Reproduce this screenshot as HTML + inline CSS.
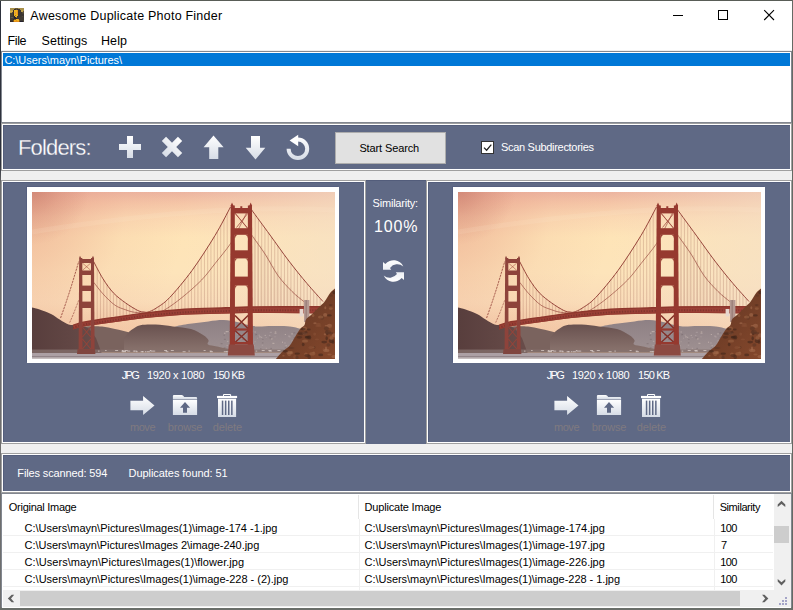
<!DOCTYPE html>
<html><head><meta charset="utf-8"><title>Awesome Duplicate Photo Finder</title>
<style>
*{margin:0;padding:0;box-sizing:border-box}
html,body{width:793px;height:610px;overflow:hidden}
body{position:relative;background:#6a6e69;font-family:"Liberation Sans",sans-serif;}
.a{position:absolute}
.t{position:absolute;white-space:pre;font-family:"Liberation Sans",sans-serif}
#win{left:1px;top:1px;width:791px;height:607px;background:#f0f0f0}
.panel{position:absolute;border:1px solid #a0a0a0;background:#fff}
.panel>i{position:absolute;left:1px;top:1px;right:1px;bottom:1px;background:#5f6985;box-shadow:inset 1px 1px 0 #545e7c}
</style></head><body>
<!-- desktop bleed edges -->
<div class="a" style="left:0;top:0;width:1px;height:610px;background:linear-gradient(#2d313c 0,#2d313c 165px,#6e6e6e 185px,#6e6e6e 100%)"></div>
<div class="a" style="left:0;top:0;width:793px;height:1px;background:#595d57"></div>
<div class="a" style="left:792px;top:0;width:1px;height:610px;background:#656a64"></div>
<div class="a" style="left:0;top:608px;width:793px;height:2px;background:#6a6e69"></div>

<div id="win" class="a"></div>
<!-- title bar + menu -->
<div class="a" style="left:1px;top:1px;width:791px;height:49px;background:#fff"></div>
<svg class="a" style="left:10px;top:8px" width="14" height="14" viewBox="0 0 14 14"><defs><filter id="ib" x="0" y="0" width="1" height="1"><feGaussianBlur stdDeviation="0.45"/></filter><clipPath id="ic"><rect width="14" height="14"/></clipPath></defs><g clip-path="url(#ic)"><rect width="14" height="14" fill="#4a4234"/><g filter="url(#ib)" shape-rendering="crispEdges"><rect x="0" y="0" width="5" height="1" fill="#a89048"/><rect x="5" y="0" width="3" height="1" fill="#6a5a38"/><rect x="8" y="0" width="6" height="1" fill="#a89048"/><rect x="0" y="1" width="4" height="1" fill="#a89048"/><rect x="4" y="1" width="1" height="1" fill="#332c28"/><rect x="5" y="1" width="1" height="1" fill="#3a3430"/><rect x="6" y="1" width="1" height="1" fill="#6a5a38"/><rect x="7" y="1" width="3" height="1" fill="#3a3430"/><rect x="10" y="1" width="4" height="1" fill="#a89048"/><rect x="0" y="2" width="3" height="1" fill="#c0a248"/><rect x="3" y="2" width="1" height="1" fill="#3a3430"/><rect x="4" y="2" width="3" height="1" fill="#f0b41c"/><rect x="7" y="2" width="1" height="1" fill="#e8921e"/><rect x="8" y="2" width="3" height="1" fill="#3a3430"/><rect x="11" y="2" width="2" height="1" fill="#c0a248"/><rect x="13" y="2" width="1" height="1" fill="#a89048"/><rect x="0" y="3" width="3" height="1" fill="#d8b048"/><rect x="3" y="3" width="1" height="1" fill="#332c28"/><rect x="4" y="3" width="3" height="1" fill="#f0b41c"/><rect x="7" y="3" width="1" height="1" fill="#e8921e"/><rect x="8" y="3" width="3" height="1" fill="#3a3430"/><rect x="11" y="3" width="2" height="1" fill="#c0a248"/><rect x="13" y="3" width="1" height="1" fill="#5a5038"/><rect x="0" y="4" width="2" height="1" fill="#c0a248"/><rect x="2" y="4" width="1" height="1" fill="#5a5038"/><rect x="3" y="4" width="1" height="1" fill="#3a3430"/><rect x="4" y="4" width="1" height="1" fill="#f0b41c"/><rect x="5" y="4" width="1" height="1" fill="#dc8c50"/><rect x="6" y="4" width="1" height="1" fill="#f0b41c"/><rect x="7" y="4" width="1" height="1" fill="#e8921e"/><rect x="8" y="4" width="4" height="1" fill="#3a3430"/><rect x="12" y="4" width="2" height="1" fill="#5a5038"/><rect x="0" y="5" width="3" height="1" fill="#4a4234"/><rect x="3" y="5" width="1" height="1" fill="#332c28"/><rect x="4" y="5" width="1" height="1" fill="#f0b41c"/><rect x="5" y="5" width="1" height="1" fill="#dc8c50"/><rect x="6" y="5" width="1" height="1" fill="#f0b41c"/><rect x="7" y="5" width="1" height="1" fill="#e8921e"/><rect x="8" y="5" width="4" height="1" fill="#3a3430"/><rect x="12" y="5" width="2" height="1" fill="#4a4234"/><rect x="0" y="6" width="3" height="1" fill="#4a4234"/><rect x="3" y="6" width="1" height="1" fill="#332c28"/><rect x="4" y="6" width="3" height="1" fill="#f0b41c"/><rect x="7" y="6" width="1" height="1" fill="#e8921e"/><rect x="8" y="6" width="6" height="1" fill="#3a3430"/><rect x="0" y="7" width="3" height="1" fill="#4a4234"/><rect x="3" y="7" width="1" height="1" fill="#332c28"/><rect x="4" y="7" width="1" height="1" fill="#f0b41c"/><rect x="5" y="7" width="1" height="1" fill="#a07420"/><rect x="6" y="7" width="2" height="1" fill="#f0b41c"/><rect x="8" y="7" width="6" height="1" fill="#3a3430"/><rect x="0" y="8" width="4" height="1" fill="#403a36"/><rect x="4" y="8" width="1" height="1" fill="#28242e"/><rect x="5" y="8" width="2" height="1" fill="#f0b41c"/><rect x="7" y="8" width="4" height="1" fill="#3a3430"/><rect x="11" y="8" width="1" height="1" fill="#403a36"/><rect x="12" y="8" width="1" height="1" fill="#504838"/><rect x="13" y="8" width="1" height="1" fill="#403a36"/><rect x="0" y="9" width="1" height="1" fill="#4a4234"/><rect x="1" y="9" width="2" height="1" fill="#5a5a4a"/><rect x="3" y="9" width="1" height="1" fill="#4a4234"/><rect x="4" y="9" width="2" height="1" fill="#28242e"/><rect x="6" y="9" width="1" height="1" fill="#a07420"/><rect x="7" y="9" width="1" height="1" fill="#3a3430"/><rect x="8" y="9" width="6" height="1" fill="#403a36"/><rect x="0" y="10" width="4" height="1" fill="#403a36"/><rect x="4" y="10" width="3" height="1" fill="#28242e"/><rect x="7" y="10" width="2" height="1" fill="#3a3430"/><rect x="9" y="10" width="5" height="1" fill="#403a36"/><rect x="0" y="11" width="3" height="1" fill="#403a36"/><rect x="3" y="11" width="1" height="1" fill="#332c28"/><rect x="4" y="11" width="2" height="1" fill="#7a5218"/><rect x="6" y="11" width="2" height="1" fill="#f0b41c"/><rect x="8" y="11" width="1" height="1" fill="#e8921e"/><rect x="9" y="11" width="5" height="1" fill="#403a36"/><rect x="0" y="12" width="3" height="1" fill="#3a3430"/><rect x="3" y="12" width="1" height="1" fill="#7a5218"/><rect x="4" y="12" width="2" height="1" fill="#f0b41c"/><rect x="6" y="12" width="1" height="1" fill="#e8921e"/><rect x="7" y="12" width="2" height="1" fill="#f0b41c"/><rect x="9" y="12" width="1" height="1" fill="#8a5a18"/><rect x="10" y="12" width="3" height="1" fill="#403a36"/><rect x="13" y="12" width="1" height="1" fill="#504838"/><rect x="0" y="13" width="3" height="1" fill="#332c28"/><rect x="3" y="13" width="1" height="1" fill="#7a5218"/><rect x="4" y="13" width="5" height="1" fill="#e8921e"/><rect x="9" y="13" width="1" height="1" fill="#7a5218"/><rect x="10" y="13" width="3" height="1" fill="#28242e"/><rect x="13" y="13" width="1" height="1" fill="#504838"/></g></g></svg>
<svg class="a" style="left:660px;top:1px" width="131" height="30" viewBox="660 1 131 30" shape-rendering="crispEdges">
<rect x="673" y="15" width="10" height="1" fill="#000"/>
<rect x="718.5" y="10.5" width="9" height="9" fill="none" stroke="#000" stroke-width="1"/>
<g shape-rendering="geometricPrecision" stroke="#000" stroke-width="1.1"><path d="M764.2,10.2L774,20M774,10.2L764.2,20"/></g>
</svg>
<div class="a" style="left:1px;top:50px;width:791px;height:1px;background:#f0f0f0"></div>
<!-- listbox -->
<div class="a" style="left:1px;top:51px;width:791px;height:72px;border:1px solid #828790;background:#fff"></div>
<div class="a" style="left:3px;top:53px;width:787px;height:13px;background:#0078d7"></div>

<!-- toolbar panel -->
<div class="panel" style="left:1px;top:123px;width:791px;height:48px"><i></i></div>
<!-- image panels -->
<div class="panel" style="left:1px;top:180px;width:365px;height:264px"><i></i></div>
<div class="a" style="left:366px;top:180px;width:60px;height:264px;background:#5f6985;box-shadow:inset 0 1px 0 #535d7b"></div>
<div class="panel" style="left:426px;top:180px;width:366px;height:264px"><i></i></div>
<!-- status panel -->
<div class="panel" style="left:1px;top:453px;width:791px;height:40px"><i></i></div>
<!-- list view -->
<div class="a" style="left:1px;top:493px;width:791px;height:115px;border:1px solid #828790;border-bottom-color:#6a6e69;background:#fff"></div>

<svg class="a" style="left:0;top:0;pointer-events:none" width="793" height="610" viewBox="0 0 793 610">
<defs>
<linearGradient id="gw" x1="0" y1="0" x2="0" y2="1"><stop offset="0" stop-color="#ffffff"/><stop offset="1" stop-color="#d6dce6"/></linearGradient>
</defs>
<path fill="url(#gw)" d="M127,136h6v8h8v6h-8v8h-6v-8h-8v-6h8z"/>
<path fill="url(#gw)" transform="rotate(45 172 147)" d="M169,135.6h6v8.4h8.4v6h-8.4v8.4h-6v-8.4h-8.4v-6h8.4z"/>
<path fill="url(#gw)" d="M213.5,135.5L223.6,147.3H218.3V159H209.2V147.3H203.6Z"/>
<path fill="url(#gw)" d="M251,136H260V147.7H265.3L255.5,159.4L245.7,147.7H251Z"/>
<path fill="none" stroke="url(#gw2)" stroke-width="4" d="M288.6,148.8A9.3,9.3 0 1 0 297.9,139.5"/>
<path fill="#fff" d="M289.6,140.6L298.2,134.8V146.2Z"/>
<defs><linearGradient id="gw2" gradientUnits="userSpaceOnUse" x1="0" y1="136" x2="0" y2="160"><stop offset="0" stop-color="#ffffff"/><stop offset="1" stop-color="#d6dce6"/></linearGradient></defs>
<rect x="335.5" y="132.5" width="110" height="31" fill="#e1e1e1" stroke="#adadad"/>
<rect x="481.5" y="141.5" width="12" height="12" fill="#fff" stroke="#333"/>
<path d="M484,147.6L486.6,150.2L491.3,144.6" fill="none" stroke="#222" stroke-width="1.3"/>
<path fill="url(#gw3)" d="M383,261.9L385.3,264A10.8,10.8 0 0 1 403.3,266.5A9.26,9.26 0 0 0 390,267.9L391.2,269.7H383Z"/>
<path fill="url(#gw3)" transform="rotate(180 393.5 271)" d="M383,261.9L385.3,264A10.8,10.8 0 0 1 403.3,266.5A9.26,9.26 0 0 0 390,267.9L391.2,269.7H383Z"/>
<defs><linearGradient id="gw3" gradientUnits="userSpaceOnUse" x1="0" y1="260" x2="0" y2="282"><stop offset="0" stop-color="#ffffff"/><stop offset="1" stop-color="#d6dce6"/></linearGradient></defs>
<g transform="translate(0 0)">
<path fill="url(#gw)" d="M130.4,400.8H143.1V396L154.5,405.5L143.1,415V410.2H130.4Z"/>
<path fill="url(#gw)" d="M172.9,396Q172.9,394.9 174,394.9H181.6Q182.4,394.9 183,395.6L184.2,396.9H196Q197.1,396.9 197.1,398V399H172.9Z"/>
<path fill="url(#gw)" d="M172.9,399.6H197.1V415H172.9Z"/>
<path fill="#5f6985" d="M185,402.1L190.1,407.7H187V412.7H183V407.7H180Z"/>
<path fill="#fff" d="M217,395.9H237.1V398.1H217Z"/>
<path fill="none" stroke="#fff" stroke-width="1" d="M223.5,396V394.5H230.6V396"/>
<path fill="url(#gw)" d="M218,398.7H236.1V417H218Z"/>
<rect x="221.8" y="400.6" width="1.5" height="14.4" fill="#5f6985"/>
<rect x="224.9" y="400.6" width="1.5" height="14.4" fill="#5f6985"/>
<rect x="228.0" y="400.6" width="1.5" height="14.4" fill="#5f6985"/>
<rect x="231.1" y="400.6" width="1.5" height="14.4" fill="#5f6985"/>
</g>
<g transform="translate(424 0)">
<path fill="url(#gw)" d="M130.4,400.8H143.1V396L154.5,405.5L143.1,415V410.2H130.4Z"/>
<path fill="url(#gw)" d="M172.9,396Q172.9,394.9 174,394.9H181.6Q182.4,394.9 183,395.6L184.2,396.9H196Q197.1,396.9 197.1,398V399H172.9Z"/>
<path fill="url(#gw)" d="M172.9,399.6H197.1V415H172.9Z"/>
<path fill="#5f6985" d="M185,402.1L190.1,407.7H187V412.7H183V407.7H180Z"/>
<path fill="#fff" d="M217,395.9H237.1V398.1H217Z"/>
<path fill="none" stroke="#fff" stroke-width="1" d="M223.5,396V394.5H230.6V396"/>
<path fill="url(#gw)" d="M218,398.7H236.1V417H218Z"/>
<rect x="221.8" y="400.6" width="1.5" height="14.4" fill="#5f6985"/>
<rect x="224.9" y="400.6" width="1.5" height="14.4" fill="#5f6985"/>
<rect x="228.0" y="400.6" width="1.5" height="14.4" fill="#5f6985"/>
<rect x="231.1" y="400.6" width="1.5" height="14.4" fill="#5f6985"/>
</g>
</svg>
<svg width="0" height="0" style="position:absolute"><defs>
<linearGradient id="skyv" x1="0" y1="0" x2="0" y2="1">
<stop offset="0" stop-color="#ecb4a0"/><stop offset="0.06" stop-color="#f4c4a6"/><stop offset="0.15" stop-color="#fbd8b2"/><stop offset="0.27" stop-color="#fee4b7"/><stop offset="0.48" stop-color="#fde4ba"/><stop offset="0.66" stop-color="#fadcb8"/><stop offset="0.75" stop-color="#f6d0ae"/><stop offset="0.81" stop-color="#f4caa8"/><stop offset="1" stop-color="#f0c4a4"/></linearGradient>
<linearGradient id="skyh" x1="0" y1="0" x2="1" y2="0">
<stop offset="0.5" stop-color="#f4e0c8" stop-opacity="0"/><stop offset="1" stop-color="#f4e0c8" stop-opacity="0.55"/></linearGradient>
<radialGradient id="skyl" gradientUnits="userSpaceOnUse" cx="-20" cy="14" r="175"><stop offset="0" stop-color="#e69a84" stop-opacity="0.62"/><stop offset="0.35" stop-color="#e69a84" stop-opacity="0.36"/><stop offset="0.65" stop-color="#e69a84" stop-opacity="0.10"/><stop offset="1" stop-color="#e69a84" stop-opacity="0"/></radialGradient>
<radialGradient id="glow" gradientUnits="userSpaceOnUse" cx="0" cy="-5" r="58"><stop offset="0" stop-color="#b8685c" stop-opacity="0.5"/><stop offset="0.5" stop-color="#b8685c" stop-opacity="0.2"/><stop offset="1" stop-color="#b8685c" stop-opacity="0"/></radialGradient>
<linearGradient id="hillL" x1="0" y1="0" x2="1" y2="0"><stop offset="0" stop-color="#583e3d"/><stop offset="1" stop-color="#694d4a"/></linearGradient>
<linearGradient id="hillM" x1="0" y1="0" x2="0" y2="1"><stop offset="0" stop-color="#69514f"/><stop offset="1" stop-color="#8a746e"/></linearGradient>
<linearGradient id="hillF" x1="0" y1="0" x2="0" y2="1"><stop offset="0" stop-color="#8e8084"/><stop offset="1" stop-color="#9f9192"/></linearGradient>
<linearGradient id="cliff" x1="0" y1="0" x2="1" y2="1"><stop offset="0" stop-color="#5e3422"/><stop offset="1" stop-color="#85482c"/></linearGradient>
<clipPath id="pc"><rect width="303" height="167"/></clipPath>

<g id="photo" clip-path="url(#pc)">
<rect width="303" height="167" fill="url(#skyv)"/>
<rect width="303" height="167" fill="url(#skyh)"/>
<rect width="303" height="167" fill="url(#skyl)"/>
<rect width="303" height="167" fill="url(#glow)"/>
<path d="M0,40Q60,30 140,22T303,18" stroke="#fff0d8" stroke-opacity=".12" stroke-width="5" fill="none"/>
<path d="M0,62Q80,50 180,52T303,44" stroke="#e8a890" stroke-opacity="0" stroke-width="4" fill="none"/>
<path fill="url(#hillF)" d="M138.0,140.0C138.9,139.1 140.0,135.9 143.7,134.5C147.4,133.1 154.5,132.3 160.0,131.5C165.5,130.7 171.2,130.0 176.5,129.4C181.8,128.8 186.9,128.0 191.7,128.1C196.4,128.2 201.3,129.3 205.0,130.0C208.7,130.7 210.8,131.8 214.0,132.5C217.2,133.2 220.2,134.2 224.5,134.4C228.8,134.7 234.4,134.0 240.0,134.0C245.6,134.0 253.3,133.9 258.0,134.4C262.7,134.9 265.5,135.9 268.3,136.8C271.1,137.7 273.9,139.5 275.0,140.0L275,160L140,160Z"/>
<rect x="205.1" y="140.0" width="1.5" height="1" fill="#b8a8a8" fill-opacity=".6"/>
<rect x="198.2" y="139.3" width="2" height="1" fill="#b8a8a8" fill-opacity=".6"/>
<rect x="263.0" y="153.2" width="1" height="1" fill="#c8b8b4" fill-opacity=".6"/>
<rect x="229.2" y="144.8" width="1" height="1" fill="#d8c8c0" fill-opacity=".6"/>
<rect x="207.2" y="155.9" width="2" height="1" fill="#c8b8b4" fill-opacity=".6"/>
<rect x="253.6" y="153.2" width="1" height="1" fill="#d8c8c0" fill-opacity=".6"/>
<rect x="211.3" y="149.9" width="1" height="1" fill="#7c6c70" fill-opacity=".6"/>
<rect x="256.8" y="144.4" width="2" height="1" fill="#b8a8a8" fill-opacity=".6"/>
<rect x="206.2" y="142.7" width="1" height="1" fill="#7c6c70" fill-opacity=".6"/>
<rect x="265.3" y="153.5" width="1" height="1" fill="#7c6c70" fill-opacity=".6"/>
<rect x="262.3" y="148.9" width="2" height="1" fill="#7c6c70" fill-opacity=".6"/>
<rect x="201.6" y="146.1" width="1.5" height="1" fill="#7c6c70" fill-opacity=".6"/>
<rect x="223.4" y="142.4" width="1" height="1" fill="#7c6c70" fill-opacity=".6"/>
<rect x="191.9" y="146.8" width="2" height="1" fill="#7c6c70" fill-opacity=".6"/>
<rect x="230.4" y="147.0" width="1" height="1" fill="#7c6c70" fill-opacity=".6"/>
<rect x="269.8" y="141.7" width="1" height="1" fill="#b8a8a8" fill-opacity=".6"/>
<rect x="239.0" y="146.4" width="1.5" height="1" fill="#d8c8c0" fill-opacity=".6"/>
<rect x="222.1" y="149.2" width="1.5" height="1" fill="#d8c8c0" fill-opacity=".6"/>
<rect x="193.6" y="139.2" width="1.5" height="1" fill="#d8c8c0" fill-opacity=".6"/>
<rect x="250.0" y="149.7" width="1" height="1" fill="#d8c8c0" fill-opacity=".6"/>
<rect x="213.1" y="141.4" width="1" height="1" fill="#b8a8a8" fill-opacity=".6"/>
<rect x="188.6" y="151.2" width="2" height="1" fill="#7c6c70" fill-opacity=".6"/>
<rect x="242.4" y="144.2" width="1.5" height="1" fill="#7c6c70" fill-opacity=".6"/>
<rect x="212.3" y="140.9" width="2" height="1" fill="#b8a8a8" fill-opacity=".6"/>
<rect x="242.8" y="139.5" width="1.5" height="1" fill="#d8c8c0" fill-opacity=".6"/>
<rect x="209.8" y="142.8" width="1.5" height="1" fill="#d8c8c0" fill-opacity=".6"/>
<rect x="233.7" y="144.9" width="1" height="1" fill="#b8a8a8" fill-opacity=".6"/>
<rect x="216.0" y="153.3" width="2" height="1" fill="#7c6c70" fill-opacity=".6"/>
<rect x="193.3" y="156.7" width="1" height="1" fill="#b8a8a8" fill-opacity=".6"/>
<rect x="194.7" y="139.2" width="2" height="1" fill="#d8c8c0" fill-opacity=".6"/>
<rect x="242.5" y="140.8" width="2" height="1" fill="#c8b8b4" fill-opacity=".6"/>
<rect x="226.7" y="142.7" width="1" height="1" fill="#c8b8b4" fill-opacity=".6"/>
<rect x="256.0" y="143.6" width="2" height="1" fill="#b8a8a8" fill-opacity=".6"/>
<rect x="269.0" y="147.1" width="1.5" height="1" fill="#d8c8c0" fill-opacity=".6"/>
<rect x="219.9" y="138.7" width="1.5" height="1" fill="#b8a8a8" fill-opacity=".6"/>
<rect x="206.1" y="154.9" width="1.5" height="1" fill="#d8c8c0" fill-opacity=".6"/>
<rect x="201.0" y="138.7" width="1" height="1" fill="#7c6c70" fill-opacity=".6"/>
<rect x="229.7" y="152.7" width="1.5" height="1" fill="#b8a8a8" fill-opacity=".6"/>
<rect x="197.0" y="139.0" width="2" height="1" fill="#7c6c70" fill-opacity=".6"/>
<rect x="194.9" y="148.8" width="1.5" height="1" fill="#c8b8b4" fill-opacity=".6"/>
<rect x="217.9" y="146.2" width="1.5" height="1" fill="#d8c8c0" fill-opacity=".6"/>
<rect x="210.2" y="147.0" width="1.5" height="1" fill="#7c6c70" fill-opacity=".6"/>
<rect x="229.9" y="150.4" width="1.5" height="1" fill="#7c6c70" fill-opacity=".6"/>
<rect x="263.4" y="156.2" width="1.5" height="1" fill="#c8b8b4" fill-opacity=".6"/>
<rect x="266.8" y="150.7" width="1.5" height="1" fill="#c8b8b4" fill-opacity=".6"/>
<rect x="261.4" y="140.4" width="2" height="1" fill="#7c6c70" fill-opacity=".6"/>
<rect x="257.8" y="154.5" width="2" height="1" fill="#b8a8a8" fill-opacity=".6"/>
<rect x="225.1" y="145.7" width="1" height="1" fill="#b8a8a8" fill-opacity=".6"/>
<rect x="252.8" y="142.0" width="1" height="1" fill="#d8c8c0" fill-opacity=".6"/>
<rect x="236.9" y="142.9" width="1.5" height="1" fill="#b8a8a8" fill-opacity=".6"/>
<rect x="259.6" y="148.5" width="1" height="1" fill="#d8c8c0" fill-opacity=".6"/>
<rect x="242.1" y="144.3" width="2" height="1" fill="#b8a8a8" fill-opacity=".6"/>
<rect x="222.4" y="139.5" width="1.5" height="1" fill="#c8b8b4" fill-opacity=".6"/>
<rect x="232.7" y="142.9" width="1" height="1" fill="#d8c8c0" fill-opacity=".6"/>
<rect x="215.8" y="152.6" width="1.5" height="1" fill="#c8b8b4" fill-opacity=".6"/>
<rect x="256.2" y="153.7" width="2" height="1" fill="#c8b8b4" fill-opacity=".6"/>
<rect x="223.6" y="141.9" width="1.5" height="1" fill="#7c6c70" fill-opacity=".6"/>
<rect x="204.9" y="147.2" width="1" height="1" fill="#b8a8a8" fill-opacity=".6"/>
<rect x="191.6" y="155.4" width="2" height="1" fill="#7c6c70" fill-opacity=".6"/>
<rect x="270.0" y="145.9" width="1" height="1" fill="#b8a8a8" fill-opacity=".6"/>
<rect x="238.4" y="155.9" width="1.5" height="1" fill="#7c6c70" fill-opacity=".6"/>
<rect x="220.9" y="153.2" width="1.5" height="1" fill="#d8c8c0" fill-opacity=".6"/>
<rect x="259.3" y="141.4" width="1.5" height="1" fill="#d8c8c0" fill-opacity=".6"/>
<rect x="227.0" y="144.4" width="2" height="1" fill="#c8b8b4" fill-opacity=".6"/>
<rect x="199.3" y="150.3" width="2" height="1" fill="#c8b8b4" fill-opacity=".6"/>
<rect x="194.4" y="152.9" width="2" height="1" fill="#b8a8a8" fill-opacity=".6"/>
<rect x="191.4" y="142.7" width="1.5" height="1" fill="#7c6c70" fill-opacity=".6"/>
<rect x="204.5" y="141.4" width="2" height="1" fill="#c8b8b4" fill-opacity=".6"/>
<rect x="189.5" y="155.2" width="2" height="1" fill="#b8a8a8" fill-opacity=".6"/>
<rect x="211.0" y="154.5" width="2" height="1" fill="#b8a8a8" fill-opacity=".6"/>
<rect x="237.5" y="145.4" width="2" height="1" fill="#7c6c70" fill-opacity=".6"/>
<rect x="215.8" y="150.6" width="1.5" height="1" fill="#d8c8c0" fill-opacity=".6"/>
<rect x="192.0" y="140.7" width="1.5" height="1" fill="#d8c8c0" fill-opacity=".6"/>
<rect x="261.7" y="145.1" width="2" height="1" fill="#7c6c70" fill-opacity=".6"/>
<rect x="237.8" y="139.8" width="2" height="1" fill="#b8a8a8" fill-opacity=".6"/>
<rect x="264.6" y="141.4" width="1.5" height="1" fill="#7c6c70" fill-opacity=".6"/>
<rect x="199.8" y="154.8" width="2" height="1" fill="#c8b8b4" fill-opacity=".6"/>
<rect x="265.7" y="153.8" width="1" height="1" fill="#7c6c70" fill-opacity=".6"/>
<rect x="198.5" y="149.1" width="2" height="1" fill="#b8a8a8" fill-opacity=".6"/>
<rect x="233.8" y="155.8" width="1" height="1" fill="#c8b8b4" fill-opacity=".6"/>
<rect x="240.4" y="150.8" width="2" height="1" fill="#d8c8c0" fill-opacity=".6"/>
<rect x="251.9" y="150.5" width="2" height="1" fill="#b8a8a8" fill-opacity=".6"/>
<rect x="205.2" y="147.3" width="1.5" height="1" fill="#d8c8c0" fill-opacity=".6"/>
<rect x="216.2" y="152.2" width="1.5" height="1" fill="#b8a8a8" fill-opacity=".6"/>
<rect x="228.0" y="156.4" width="1.5" height="1" fill="#7c6c70" fill-opacity=".6"/>
<rect x="222.3" y="149.2" width="1" height="1" fill="#7c6c70" fill-opacity=".6"/>
<rect x="261.3" y="146.7" width="1.5" height="1" fill="#7c6c70" fill-opacity=".6"/>
<rect x="265.8" y="149.8" width="2" height="1" fill="#d8c8c0" fill-opacity=".6"/>
<rect x="190.8" y="156.5" width="2" height="1" fill="#7c6c70" fill-opacity=".6"/>
<rect x="252.7" y="155.3" width="1.5" height="1" fill="#7c6c70" fill-opacity=".6"/>
<path fill="#7a635e" d="M40.0,136.0C43.0,135.7 53.0,134.5 58.0,134.3C63.0,134.1 65.8,134.2 70.0,134.6C74.2,135.0 78.3,136.0 83.0,137.0C87.7,138.0 94.2,139.2 98.0,140.7C101.8,142.2 104.7,145.1 106.0,146.0L106,160L40,160Z"/>
<path fill="url(#hillM)" d="M92.0,146.0C92.7,145.2 94.7,142.4 96.0,141.0C97.3,139.6 97.9,138.8 100.0,137.5C102.1,136.2 104.5,134.0 108.4,133.2C112.3,132.4 118.2,132.4 123.6,132.6C129.0,132.8 135.1,133.7 141.0,134.4C146.9,135.1 153.9,135.5 159.0,137.0C164.1,138.5 168.6,141.4 171.5,143.3C174.4,145.2 175.8,146.8 176.5,148.3C177.2,149.8 174.6,151.5 176.0,152.5C177.4,153.5 181.5,153.8 185.0,154.5C188.5,155.2 195.0,156.6 197.0,157.0L197,160L92,160Z"/>
<path fill="url(#hillL)" d="M0.0,115.4C1.3,115.7 4.4,116.3 7.6,117.4C10.8,118.5 15.7,120.3 19.0,122.0C22.4,123.7 24.8,125.8 27.7,127.6C30.6,129.4 33.6,131.6 36.6,132.6C39.6,133.6 42.2,132.9 45.4,133.5C48.6,134.1 52.9,133.9 56.0,136.0C59.1,138.1 62.7,144.3 64.0,146.0L70,162L0,162Z"/>
<rect x="0" y="157.5" width="260" height="4.5" fill="#85726e" fill-opacity=".75"/>
<rect x="102.2" y="158.6" width="3" height="1" fill="#e0d4d0" fill-opacity=".7"/>
<rect x="207.8" y="158.0" width="1.5" height="1" fill="#e0d4d0" fill-opacity=".7"/>
<rect x="73.1" y="158.0" width="1.5" height="1" fill="#e0d4d0" fill-opacity=".7"/>
<rect x="91.0" y="159.2" width="3" height="1" fill="#e0d4d0" fill-opacity=".7"/>
<rect x="177.9" y="159.2" width="3" height="1" fill="#e0d4d0" fill-opacity=".7"/>
<rect x="109.8" y="159.2" width="1.5" height="1" fill="#e0d4d0" fill-opacity=".7"/>
<rect x="89.9" y="158.0" width="1.5" height="1" fill="#e0d4d0" fill-opacity=".7"/>
<rect x="66.0" y="158.6" width="1.5" height="1" fill="#e0d4d0" fill-opacity=".7"/>
<rect x="83.1" y="158.0" width="3" height="1" fill="#e0d4d0" fill-opacity=".7"/>
<rect x="114.9" y="159.2" width="3" height="1" fill="#e0d4d0" fill-opacity=".7"/>
<rect x="92.7" y="158.0" width="3" height="1" fill="#e0d4d0" fill-opacity=".7"/>
<rect x="138.8" y="158.0" width="3" height="1" fill="#e0d4d0" fill-opacity=".7"/>
<rect x="196.7" y="159.2" width="2" height="1" fill="#e0d4d0" fill-opacity=".7"/>
<rect x="191.8" y="159.2" width="3" height="1" fill="#e0d4d0" fill-opacity=".7"/>
<rect x="89.6" y="158.6" width="1.5" height="1" fill="#e0d4d0" fill-opacity=".7"/>
<rect x="100.9" y="158.6" width="2" height="1" fill="#e0d4d0" fill-opacity=".7"/>
<rect x="156.4" y="158.6" width="1.5" height="1" fill="#e0d4d0" fill-opacity=".7"/>
<rect x="91.0" y="158.6" width="3" height="1" fill="#e0d4d0" fill-opacity=".7"/>
<rect x="134.4" y="159.2" width="2" height="1" fill="#e0d4d0" fill-opacity=".7"/>
<rect x="223.7" y="158.6" width="1.5" height="1" fill="#e0d4d0" fill-opacity=".7"/>
<rect x="133.5" y="158.6" width="1.5" height="1" fill="#e0d4d0" fill-opacity=".7"/>
<rect x="112.9" y="159.2" width="1.5" height="1" fill="#e0d4d0" fill-opacity=".7"/>
<rect x="117.8" y="158.0" width="1.5" height="1" fill="#e0d4d0" fill-opacity=".7"/>
<rect x="89.8" y="159.2" width="1.5" height="1" fill="#e0d4d0" fill-opacity=".7"/>
<rect x="104.1" y="159.2" width="1.5" height="1" fill="#e0d4d0" fill-opacity=".7"/>
<rect x="150.6" y="159.2" width="3" height="1" fill="#e0d4d0" fill-opacity=".7"/>
<rect x="95.2" y="158.6" width="3" height="1" fill="#e0d4d0" fill-opacity=".7"/>
<rect x="194.2" y="159.2" width="3" height="1" fill="#e0d4d0" fill-opacity=".7"/>
<rect x="132.1" y="158.0" width="3" height="1" fill="#e0d4d0" fill-opacity=".7"/>
<rect x="171.6" y="158.0" width="2" height="1" fill="#e0d4d0" fill-opacity=".7"/>
<rect x="177.7" y="158.6" width="2" height="1" fill="#e0d4d0" fill-opacity=".7"/>
<rect x="236.8" y="158.6" width="3" height="1" fill="#e0d4d0" fill-opacity=".7"/>
<rect x="200.2" y="159.2" width="1.5" height="1" fill="#e0d4d0" fill-opacity=".7"/>
<rect x="108.6" y="159.2" width="3" height="1" fill="#e0d4d0" fill-opacity=".7"/>
<rect x="118.4" y="158.6" width="3" height="1" fill="#e0d4d0" fill-opacity=".7"/>
<rect x="218.4" y="158.0" width="1.5" height="1" fill="#e0d4d0" fill-opacity=".7"/>
<rect x="229.7" y="158.0" width="3" height="1" fill="#e0d4d0" fill-opacity=".7"/>
<rect x="245.4" y="158.0" width="3" height="1" fill="#e0d4d0" fill-opacity=".7"/>
<rect x="121.2" y="158.6" width="2" height="1" fill="#e0d4d0" fill-opacity=".7"/>
<rect x="236.4" y="158.0" width="3" height="1" fill="#e0d4d0" fill-opacity=".7"/>
<rect x="0" y="161" width="303" height="6" fill="#aca0a4"/>
<rect x="0" y="164.2" width="303" height="1" fill="#8a7e82"/>
<rect x="0" y="165.6" width="303" height="1.4" fill="#c6bebe"/>
<path d="M65.20,76.1V128.0M68.45,82.1V127.5M71.70,87.7V127.0M74.95,92.1V126.6M78.20,96.5V126.1M81.45,100.9V125.6M84.70,103.6V125.1M87.95,106.3V124.7M91.20,109.0V124.2M94.45,111.5V123.7M97.70,113.5V123.3M100.95,115.5V122.8M104.20,117.5V122.4M107.45,118.9V121.9M110.70,119.7V121.4M120.45,117.9V120.4M123.70,116.4V120.1M126.95,113.9V119.8M130.20,111.4V119.4M133.45,108.9V119.1M136.70,106.3V118.8M139.95,102.7V118.5M143.20,98.8V118.2M146.45,94.9V117.9M149.70,91.0V117.6M152.95,87.0V117.3M156.20,83.1V117.2M159.45,79.2V117.1M162.70,74.4V116.9M165.95,69.4V116.8M169.20,64.5V116.7M172.45,59.6V116.6M175.70,54.6V116.5M178.95,49.7V116.3M182.20,44.7V116.2M185.45,39.0V116.1M188.70,33.0V116.0M191.95,27.0V115.9M195.20,21.1V115.8M223.20,22.8V115.0M226.45,27.2V114.9M229.70,31.7V114.9M232.95,36.1V114.9M236.20,40.5V114.9M239.45,45.0V114.9M242.70,49.5V114.8M245.95,53.9V114.8M249.20,58.4V114.8M252.45,62.9V114.8M255.70,67.3V114.8M258.95,71.5V114.8M262.20,75.6V114.8M265.45,79.6V114.8M268.70,83.7V114.8M271.95,87.7V114.7M275.20,91.7V114.7M278.45,95.4V114.7M281.70,99.0V114.7M284.95,102.7V114.7M288.20,106.3V114.7" stroke="#98604f" stroke-opacity=".5" stroke-width=".55" fill="none"/>
<path d="M222.35,44.6V115.0M225.60,49.2V115.0M228.85,53.8V114.9M232.10,58.4V114.9M235.35,63.2V114.9M238.60,68.6V114.9M241.85,74.0V114.9M245.10,79.4V114.8M248.35,84.5V114.8M251.60,88.2V114.8M254.85,91.9V114.8M258.10,95.5V114.8M261.35,99.2V114.8M264.60,102.0V114.8M267.85,104.8V114.8M271.10,107.6V114.8" stroke="#9a5a4c" stroke-opacity=".28" stroke-width=".6" fill="none"/>
<path d="M61.9,90.5C63.4,92.4 67.5,98.1 71.0,101.9C74.5,105.7 79.2,110.6 83.0,113.2C86.8,115.8 90.4,116.6 93.7,117.8C97.0,119.0 98.7,119.7 102.7,120.3C106.8,120.9 114.1,121.2 118.0,121.2C121.9,121.2 123.4,120.9 126.0,120.2C128.6,119.5 129.7,119.8 133.7,117.3C137.7,114.8 144.0,110.4 150.0,105.5C156.0,100.6 164.1,93.7 169.6,88.0C175.1,82.3 178.2,77.6 183.0,71.6C187.8,65.5 194.5,57.6 198.5,51.7C202.5,45.8 204.1,41.6 207.0,36.0C209.9,30.4 214.5,21.0 216.0,18.0" stroke="#8c362e" stroke-opacity="0.75" stroke-width="0.8" fill="none"/>
<path d="M201.5,19.0C203.6,21.7 211.1,30.8 214.3,35.0C217.5,39.2 217.6,40.0 220.7,44.5C223.8,49.0 228.7,55.4 233.0,62.0C237.3,68.6 241.8,77.8 246.3,84.0C250.8,90.2 255.8,95.2 260.0,99.5C264.2,103.8 269.8,107.8 271.8,109.5" stroke="#8c362e" stroke-opacity="0.75" stroke-width="0.8" fill="none"/>
<path d="M37.7,130.6C38.4,128.9 40.5,124.3 42.0,120.5C43.5,116.7 46.0,110.1 46.8,108.0" stroke="#8c362e" stroke-opacity="0.7" stroke-width="0.8" fill="none" stroke-dasharray="2.2 .9"/>
<path d="M61.1,68.6C62.8,71.6 67.6,81.4 71.0,86.8C74.4,92.2 77.8,97.1 81.6,101.1C85.4,105.1 89.7,108.1 93.7,111.0C97.7,113.9 102.8,117.0 105.8,118.5C108.8,120.0 110.3,119.8 112.0,120.0C113.7,120.2 114.0,120.6 116.0,120.0C118.0,119.4 120.3,118.7 123.9,116.3C127.5,113.9 131.5,112.0 137.5,105.7C143.5,99.4 152.4,88.9 160.0,78.5C167.6,68.1 176.6,54.1 183.0,43.5C189.4,32.9 195.9,19.8 198.5,15.0" stroke="#8c362e" stroke-opacity="0.95" stroke-width="0.95" fill="none"/>
<path d="M219.6,17.9C222.7,22.1 231.8,34.5 238.0,43.0C244.2,51.5 250.7,60.9 256.9,69.0C263.1,77.1 269.3,84.8 275.0,91.5C280.7,98.2 288.3,106.5 291.0,109.5" stroke="#8c362e" stroke-opacity="0.95" stroke-width="0.95" fill="none"/>
<path d="M28.6,126.0C29.5,123.4 32.1,116.2 34.0,110.5C35.9,104.8 37.9,98.9 40.0,92.0C42.1,85.1 45.7,73.1 46.8,69.3" stroke="#8c362e" stroke-opacity="0.85" stroke-width="0.9" fill="none" stroke-dasharray="2.2 .9"/>
<path d="M41.0,133.2C42.5,132.7 46.5,131.2 50.0,130.4C53.5,129.6 57.0,129.3 62.0,128.5C67.0,127.7 71.5,127.0 80.0,125.8C88.5,124.6 100.9,122.5 113.0,121.1C125.1,119.7 139.1,118.2 152.6,117.3C166.1,116.4 183.4,116.2 194.0,115.8C204.6,115.4 206.7,115.2 216.0,115.0C225.3,114.8 237.7,114.8 250.0,114.8C262.3,114.8 283.3,114.7 290.0,114.7L290.0,121.4 L250.0,121.1 L216.0,121.0 L194.0,121.6 L152.6,122.7 L113.0,126.1 L80.0,130.5 L62.0,133.0 L50.0,134.8 L41.0,137.5Z" fill="#9b4036"/>
<path d="M41.0,133.2C42.5,132.7 46.5,131.2 50.0,130.4C53.5,129.6 57.0,129.3 62.0,128.5C67.0,127.7 71.5,127.0 80.0,125.8C88.5,124.6 100.9,122.5 113.0,121.1C125.1,119.7 139.1,118.2 152.6,117.3C166.1,116.4 183.4,116.2 194.0,115.8C204.6,115.4 206.7,115.2 216.0,115.0C225.3,114.8 237.7,114.8 250.0,114.8C262.3,114.8 283.3,114.7 290.0,114.7" stroke="#8e362c" stroke-width="1.4" fill="none"/>
<path d="M41.0,137.0C42.5,136.5 46.5,135.0 50.0,134.3C53.5,133.5 57.0,133.2 62.0,132.5C67.0,131.8 71.5,131.1 80.0,130.0C88.5,128.8 100.9,126.9 113.0,125.6C125.1,124.3 139.1,122.9 152.6,122.2C166.1,121.4 183.4,121.4 194.0,121.1C204.6,120.8 206.7,120.6 216.0,120.5C225.3,120.4 237.7,120.5 250.0,120.6C262.3,120.7 283.3,120.9 290.0,120.9" stroke="#93392f" stroke-width="1" fill="none"/>
<path d="M41.0,135.6C42.5,135.1 46.5,133.6 50.0,132.8C53.5,132.0 57.0,131.7 62.0,131.0C67.0,130.2 71.5,129.6 80.0,128.4C88.5,127.2 100.9,125.2 113.0,123.8C125.1,122.5 139.1,121.1 152.6,120.3C166.1,119.4 183.4,119.3 194.0,119.0C204.6,118.6 206.7,118.4 216.0,118.3C225.3,118.2 237.7,118.3 250.0,118.3C262.3,118.3 283.3,118.4 290.0,118.4" stroke="#6a2c26" stroke-width="1.8" stroke-dasharray="1.2 1.5" stroke-opacity=".55" fill="none"/>
<path fill="#96392f" d="M198.7,13.5H202.8L203.0,153H197.7Z"/>
<path fill="#96392f" d="M215.9,13.5H220L221.0,153H215.70000000000002Z"/>
<rect x="199.7" y="16" width="19.30000000000001" height="5.399999999999999" fill="#96392f"/>
<rect x="199.7" y="36.2" width="19.30000000000001" height="6.599999999999994" fill="#96392f"/>
<rect x="199.7" y="58.3" width="19.30000000000001" height="8.100000000000009" fill="#96392f"/>
<rect x="199.7" y="84.6" width="19.30000000000001" height="8.900000000000006" fill="#96392f"/>
<path fill="#96392f" d="M198.5,14L200,10.5L201.6,14ZM217.2,14L218.7,10.5L220.2,14ZM208.3,16V14.2H210.3V16Z"/>
<path fill="#96392f" d="M203,42.8h2.6q-2.4,.6 -2.6,3.4zM215.9,42.8h-2.6q2.4,.6 2.6,3.4z"/>
<path fill="#96392f" d="M203,66.4h2.6q-2.4,.6 -2.6,3.4zM215.9,66.4h-2.6q2.4,.6 2.6,3.4z"/>
<path fill="#96392f" d="M203,93.5h2.6q-2.4,.6 -2.6,3.4zM215.9,93.5h-2.6q2.4,.6 2.6,3.4z"/>
<path stroke="#822f27" stroke-width="1.5" fill="none" d="M203,123.5L216,136.5M216,123.5L203,136.5M203,138.5L216,150.5M216,138.5L203,150.5"/>
<rect x="202" y="136.4" width="15" height="2.2" fill="#96392f"/><rect x="202" y="150" width="15" height="2.5" fill="#96392f"/>
<path fill="#8c4a42" d="M196.8,152.5H221.8L222.8,163.5H195.8Z"/>
<path fill="#8e433b" d="M47.2,66H50.3L50.5,158H46.6Z"/>
<path fill="#8e433b" d="M59,66H62L62.6,158H58.8Z"/>
<rect x="48.2" y="67" width="12.799999999999997" height="4" fill="#8e433b"/>
<rect x="48.2" y="78.5" width="12.799999999999997" height="4.5" fill="#8e433b"/>
<rect x="48.2" y="93.6" width="12.799999999999997" height="5.400000000000006" fill="#8e433b"/>
<rect x="48.2" y="109.6" width="12.799999999999997" height="6.400000000000006" fill="#8e433b"/>
<path fill="#8e433b" d="M47,66.2L48,63.8L49.2,66.2ZM59.8,66.2L61,63.8L62.1,66.2Z"/>
<path stroke="#93443a" stroke-width="1.1" fill="none" d="M50.4,135L58.8,145M58.8,135L50.4,145M50.4,147L58.8,157M58.8,147L50.4,157"/>
<path fill="#80463f" d="M45.5,157H63L63.4,162H45Z"/>
<path stroke="#9c3e34" stroke-width=".9" stroke-opacity=".8" fill="none" d="M203,21.5L215.7,36M215.7,21.5L204.5,35.5"/>
<path stroke="#9c3e34" stroke-width=".7" stroke-opacity=".7" fill="none" d="M50.4,71L58.8,78.4M58.8,71L50.4,78.4"/>
<rect x="272" y="108" width="5.4" height="22" fill="#b59992"/><rect x="273.5" y="108" width="1.4" height="22" fill="#9c807a"/>
<rect x="267.6" y="117" width="3.8" height="7.4" fill="#e6d6ce"/>
<path fill="url(#cliff)" d="M243.0,168.0C244.2,166.7 247.5,162.4 250.0,160.0C252.5,157.6 255.6,155.9 257.8,153.4C260.0,150.9 261.2,147.8 263.0,145.0C264.8,142.2 266.7,138.8 268.3,136.8C269.9,134.8 271.6,134.6 272.5,133.0C273.4,131.4 272.9,129.2 274.0,127.5C275.1,125.8 276.9,125.0 279.0,123.0C281.1,121.0 284.1,117.9 286.4,115.7C288.6,113.5 290.5,112.2 292.5,109.7C294.5,107.2 296.7,102.9 298.5,100.6C300.3,98.3 302.7,96.8 303.5,96.0L304,168Z"/>
<ellipse cx="272.9" cy="136.6" rx="2.0" ry="2.0" fill="#9c6444" fill-opacity=".55"/>
<ellipse cx="274.2" cy="140.4" rx="1.2" ry="1.2" fill="#3e241a" fill-opacity=".55"/>
<ellipse cx="302.0" cy="164.6" rx="2.6" ry="1.7" fill="#a87050" fill-opacity=".55"/>
<ellipse cx="282.3" cy="155.4" rx="1.1" ry="1.1" fill="#4a2a1e" fill-opacity=".55"/>
<ellipse cx="294.3" cy="133.8" rx="1.6" ry="0.8" fill="#a87050" fill-opacity=".55"/>
<ellipse cx="299.2" cy="103.7" rx="1.7" ry="1.1" fill="#5a3424" fill-opacity=".55"/>
<ellipse cx="290.1" cy="125.6" rx="1.9" ry="2.1" fill="#5a3424" fill-opacity=".55"/>
<ellipse cx="259.5" cy="160.8" rx="1.8" ry="1.8" fill="#9c6444" fill-opacity=".55"/>
<ellipse cx="271.1" cy="137.1" rx="2.7" ry="1.2" fill="#3e241a" fill-opacity=".55"/>
<ellipse cx="301.0" cy="150.3" rx="1.3" ry="1.8" fill="#4a2a1e" fill-opacity=".55"/>
<ellipse cx="274.8" cy="145.1" rx="2.0" ry="1.1" fill="#3e241a" fill-opacity=".55"/>
<ellipse cx="262.8" cy="165.0" rx="1.7" ry="2.0" fill="#8a5236" fill-opacity=".55"/>
<ellipse cx="295.0" cy="142.3" rx="1.1" ry="1.0" fill="#4a2a1e" fill-opacity=".55"/>
<ellipse cx="281.6" cy="155.3" rx="1.2" ry="0.9" fill="#9c6444" fill-opacity=".55"/>
<ellipse cx="281.1" cy="123.6" rx="1.3" ry="1.6" fill="#9c6444" fill-opacity=".55"/>
<ellipse cx="269.2" cy="141.3" rx="3.0" ry="1.9" fill="#5a3424" fill-opacity=".55"/>
<ellipse cx="288.7" cy="162.9" rx="2.5" ry="1.3" fill="#3e241a" fill-opacity=".55"/>
<ellipse cx="288.7" cy="125.0" rx="2.8" ry="1.6" fill="#9c6444" fill-opacity=".55"/>
<ellipse cx="294.9" cy="140.4" rx="1.5" ry="2.1" fill="#5a3424" fill-opacity=".55"/>
<ellipse cx="277.2" cy="165.1" rx="1.8" ry="2.0" fill="#4a2a1e" fill-opacity=".55"/>
<ellipse cx="301.9" cy="143.3" rx="2.1" ry="2.1" fill="#a87050" fill-opacity=".55"/>
<ellipse cx="280.4" cy="161.7" rx="3.0" ry="1.8" fill="#9c6444" fill-opacity=".55"/>
<ellipse cx="283.0" cy="131.3" rx="1.7" ry="1.0" fill="#a87050" fill-opacity=".55"/>
<ellipse cx="299.5" cy="148.9" rx="2.7" ry="2.1" fill="#3e241a" fill-opacity=".55"/>
<ellipse cx="267.4" cy="145.3" rx="2.9" ry="1.4" fill="#4a2a1e" fill-opacity=".55"/>
<ellipse cx="291.5" cy="157.6" rx="1.0" ry="1.7" fill="#8a5236" fill-opacity=".55"/>
<ellipse cx="299.4" cy="145.9" rx="2.0" ry="2.0" fill="#9c6444" fill-opacity=".55"/>
<ellipse cx="286.4" cy="132.3" rx="2.5" ry="1.5" fill="#8a5236" fill-opacity=".55"/>
<ellipse cx="297.3" cy="123.4" rx="2.5" ry="1.1" fill="#3e241a" fill-opacity=".55"/>
<ellipse cx="257.3" cy="160.5" rx="3.0" ry="1.5" fill="#a87050" fill-opacity=".55"/>
<ellipse cx="292.2" cy="150.1" rx="2.9" ry="1.3" fill="#3e241a" fill-opacity=".55"/>
<ellipse cx="294.0" cy="156.6" rx="1.1" ry="2.2" fill="#a87050" fill-opacity=".55"/>
<ellipse cx="273.9" cy="161.9" rx="1.8" ry="1.5" fill="#9c6444" fill-opacity=".55"/>
<ellipse cx="285.0" cy="147.4" rx="2.0" ry="0.9" fill="#8a5236" fill-opacity=".55"/>
<ellipse cx="272.6" cy="141.5" rx="2.4" ry="1.3" fill="#a87050" fill-opacity=".55"/>
<ellipse cx="293.3" cy="115.7" rx="1.0" ry="1.5" fill="#a87050" fill-opacity=".55"/>
<ellipse cx="286.4" cy="133.9" rx="3.2" ry="1.0" fill="#8a5236" fill-opacity=".55"/>
<ellipse cx="294.7" cy="146.3" rx="1.2" ry="2.1" fill="#3e241a" fill-opacity=".55"/>
<ellipse cx="272.9" cy="141.2" rx="1.8" ry="1.6" fill="#4a2a1e" fill-opacity=".55"/>
<ellipse cx="296.4" cy="153.0" rx="2.0" ry="1.7" fill="#5a3424" fill-opacity=".55"/>
<ellipse cx="293.0" cy="142.3" rx="1.3" ry="1.1" fill="#a87050" fill-opacity=".55"/>
<ellipse cx="265.0" cy="165.4" rx="1.6" ry="1.8" fill="#5a3424" fill-opacity=".55"/>
<ellipse cx="298.6" cy="113.1" rx="1.9" ry="0.8" fill="#4a2a1e" fill-opacity=".55"/>
<ellipse cx="277.3" cy="145.4" rx="2.0" ry="2.2" fill="#3e241a" fill-opacity=".55"/>
<ellipse cx="297.5" cy="133.8" rx="2.5" ry="2.1" fill="#a87050" fill-opacity=".55"/>
<ellipse cx="275.1" cy="163.5" rx="2.7" ry="1.4" fill="#4a2a1e" fill-opacity=".55"/>
<ellipse cx="278.7" cy="155.4" rx="2.4" ry="1.5" fill="#8a5236" fill-opacity=".55"/>
<ellipse cx="294.4" cy="136.6" rx="2.5" ry="2.1" fill="#5a3424" fill-opacity=".55"/>
<ellipse cx="295.9" cy="140.1" rx="2.9" ry="2.2" fill="#5a3424" fill-opacity=".55"/>
<ellipse cx="276.8" cy="137.5" rx="1.9" ry="1.0" fill="#3e241a" fill-opacity=".55"/>
<ellipse cx="298.5" cy="135.5" rx="1.3" ry="0.9" fill="#8a5236" fill-opacity=".55"/>
<ellipse cx="257.2" cy="162.2" rx="1.9" ry="2.1" fill="#9c6444" fill-opacity=".55"/>
<ellipse cx="298.8" cy="116.6" rx="2.1" ry="1.3" fill="#9c6444" fill-opacity=".55"/>
<ellipse cx="297.5" cy="162.6" rx="2.2" ry="1.0" fill="#9c6444" fill-opacity=".55"/>
<ellipse cx="301.8" cy="100.5" rx="1.5" ry="1.8" fill="#3e241a" fill-opacity=".55"/>
<ellipse cx="282.7" cy="142.1" rx="1.5" ry="1.6" fill="#8a5236" fill-opacity=".55"/>
<ellipse cx="298.3" cy="141.3" rx="3.0" ry="1.2" fill="#5a3424" fill-opacity=".55"/>
<ellipse cx="265.3" cy="161.7" rx="2.7" ry="1.1" fill="#3e241a" fill-opacity=".55"/>
<ellipse cx="253.3" cy="159.3" rx="2.6" ry="1.2" fill="#3e241a" fill-opacity=".55"/>
<ellipse cx="271.2" cy="152.5" rx="1.4" ry="1.7" fill="#3e241a" fill-opacity=".55"/>
<ellipse cx="293.2" cy="122.9" rx="2.1" ry="1.9" fill="#a87050" fill-opacity=".55"/>
<ellipse cx="275.7" cy="145.3" rx="2.8" ry="1.5" fill="#3e241a" fill-opacity=".55"/>
<ellipse cx="281.7" cy="160.5" rx="1.3" ry="1.1" fill="#9c6444" fill-opacity=".55"/>
<ellipse cx="259.2" cy="156.0" rx="3.0" ry="0.9" fill="#5a3424" fill-opacity=".55"/>
<ellipse cx="251.4" cy="163.7" rx="1.2" ry="0.9" fill="#9c6444" fill-opacity=".55"/>
<ellipse cx="268.5" cy="141.7" rx="2.9" ry="1.1" fill="#4a2a1e" fill-opacity=".55"/>
<ellipse cx="273.0" cy="149.0" rx="3.0" ry="1.6" fill="#9c6444" fill-opacity=".55"/>
<ellipse cx="294.3" cy="158.4" rx="3.1" ry="1.6" fill="#a87050" fill-opacity=".55"/>
</g></defs></svg>
<div class="a" style="left:27px;top:187px;width:312px;height:176px;background:#fff;box-shadow:-1px -1px 0 #566080"></div>
<svg class="a" style="left:32px;top:192px" width="303" height="167" viewBox="0 0 303 167"><use href="#photo"/></svg>
<div class="a" style="left:453px;top:187px;width:312px;height:176px;background:#fff;box-shadow:-1px -1px 0 #566080"></div>
<svg class="a" style="left:458px;top:192px" width="303" height="167" viewBox="0 0 303 167"><use href="#photo"/></svg>
<svg class="a" style="left:0;top:0" width="793" height="610" viewBox="0 0 793 610" shape-rendering="crispEdges">
<rect x="358" y="495" width="1" height="24" fill="#e5e5e5"/>
<rect x="359" y="519" width="1" height="72" fill="#f0f0f0"/>
<rect x="713" y="495" width="1" height="24" fill="#e5e5e5"/>
<rect x="714" y="519" width="1" height="72" fill="#f0f0f0"/>
<rect x="3" y="535" width="770" height="1" fill="#f0f0f0"/>
<rect x="3" y="552" width="770" height="1" fill="#f0f0f0"/>
<rect x="3" y="569" width="770" height="1" fill="#f0f0f0"/>
<rect x="3" y="586" width="770" height="1" fill="#f0f0f0"/>
<rect x="774" y="494" width="17" height="97" fill="#f0f0f0"/>
<rect x="774" y="526" width="15" height="17" fill="#cdcdcd"/>
<rect x="3" y="590" width="788" height="17" fill="#f0f0f0"/>
<rect x="20" y="591" width="720" height="15" fill="#cdcdcd"/>
<rect x="2" y="607" width="789" height="1" fill="#fff"/>
<g shape-rendering="geometricPrecision" fill="#606060">
<path d="M781.5,500.7L785.3,504.6V507.1L781.5,503.9L777.7,507.1V504.6Z"/>
<path d="M781.5,585.4L785.3,581.5V579L781.5,582.2L777.7,579V581.5Z"/>
<path d="M7.8,598.5L11.7,594.7H14.2L11,598.5L14.2,602.3H11.7Z"/>
<path d="M768.4,598.5L764.5,594.7H762L765.2,598.5L762,602.3H764.5Z"/>
</g>
<rect x="785" y="597" width="2" height="2" fill="#a5a5c8"/>
<rect x="782" y="600" width="2" height="2" fill="#a5a5c8"/>
<rect x="785" y="600" width="2" height="2" fill="#a5a5c8"/>
<rect x="779" y="603" width="2" height="2" fill="#a5a5c8"/>
<rect x="782" y="603" width="2" height="2" fill="#a5a5c8"/>
<rect x="785" y="603" width="2" height="2" fill="#a5a5c8"/>
</svg>
<span id="t_title" class="t" style="left:30.30px;top:7.67px;font-size:12.5px;line-height:16px;letter-spacing:0.223px;color:#000">Awesome Duplicate Photo Finder</span>
<span id="t_file" class="t" style="left:7.50px;top:32.87px;font-size:12.5px;line-height:16px;letter-spacing:-0.363px;color:#000">File</span>
<span id="t_settings" class="t" style="left:41.50px;top:32.87px;font-size:12.5px;line-height:16px;letter-spacing:0.069px;color:#000">Settings</span>
<span id="t_help" class="t" style="left:101.00px;top:32.87px;font-size:12.5px;line-height:16px;letter-spacing:0.081px;color:#000">Help</span>
<span id="t_path" class="t" style="left:4.40px;top:53.19px;font-size:11px;line-height:14px;letter-spacing:-0.042px;color:#fff">C:\Users\mayn\Pictures\</span>
<span id="t_folders" class="t" style="left:18.00px;top:132.88px;font-size:22px;line-height:29px;letter-spacing:-0.837px;color:#fff;-webkit-text-stroke:0.28px #5f6985">Folders:</span>
<span id="t_start" class="t" style="left:359.40px;top:141.19px;font-size:11px;line-height:14px;letter-spacing:-0.120px;color:#000">Start Search</span>
<span id="t_scan" class="t" style="left:501.00px;top:140.49px;font-size:11px;line-height:14px;letter-spacing:-0.302px;color:#fff">Scan Subdirectories</span>
<span id="t_i1a" class="t" style="left:121.70px;top:368.19px;font-size:11px;line-height:14px;letter-spacing:-1.618px;color:#fff">JPG</span>
<span id="t_i1b" class="t" style="left:146.90px;top:368.19px;font-size:11px;line-height:14px;letter-spacing:-0.274px;color:#fff">1920 x 1080</span>
<span id="t_i1c" class="t" style="left:213.10px;top:368.19px;font-size:11px;line-height:14px;letter-spacing:-0.829px;color:#fff">150 KB</span>
<span id="t_i2a" class="t" style="left:546.70px;top:368.19px;font-size:11px;line-height:14px;letter-spacing:-1.618px;color:#fff">JPG</span>
<span id="t_i2b" class="t" style="left:571.90px;top:368.19px;font-size:11px;line-height:14px;letter-spacing:-0.274px;color:#fff">1920 x 1080</span>
<span id="t_i2c" class="t" style="left:638.10px;top:368.19px;font-size:11px;line-height:14px;letter-spacing:-0.829px;color:#fff">150 KB</span>
<span id="t_move1" class="t" style="left:129.90px;top:419.99px;font-size:11px;line-height:14px;letter-spacing:-0.427px;color:#7f7a80">move</span>
<span id="t_browse1" class="t" style="left:167.70px;top:419.99px;font-size:11px;line-height:14px;letter-spacing:-0.148px;color:#7f7a80">browse</span>
<span id="t_delete1" class="t" style="left:212.70px;top:419.99px;font-size:11px;line-height:14px;letter-spacing:-0.111px;color:#7f7a80">delete</span>
<span id="t_move2" class="t" style="left:553.90px;top:419.99px;font-size:11px;line-height:14px;letter-spacing:-0.427px;color:#7f7a80">move</span>
<span id="t_browse2" class="t" style="left:591.70px;top:419.99px;font-size:11px;line-height:14px;letter-spacing:-0.148px;color:#7f7a80">browse</span>
<span id="t_delete2" class="t" style="left:636.70px;top:419.99px;font-size:11px;line-height:14px;letter-spacing:-0.111px;color:#7f7a80">delete</span>
<span id="t_sim" class="t" style="left:372.60px;top:196.19px;font-size:11px;line-height:14px;letter-spacing:-0.211px;color:#fff">Similarity:</span>
<span id="t_pct" class="t" style="left:374.00px;top:215.76px;font-size:16px;line-height:21px;letter-spacing:0.868px;color:#fff">100%</span>
<span id="t_files" class="t" style="left:17.30px;top:466.19px;font-size:11px;line-height:14px;letter-spacing:-0.136px;color:#fff">Files scanned: 594</span>
<span id="t_dups" class="t" style="left:128.60px;top:466.19px;font-size:11px;line-height:14px;letter-spacing:-0.062px;color:#fff">Duplicates found: 51</span>
<span id="t_h1" class="t" style="left:8.80px;top:500.19px;font-size:11px;line-height:14px;letter-spacing:-0.278px;color:#000">Original Image</span>
<span id="t_h2" class="t" style="left:364.50px;top:500.19px;font-size:11px;line-height:14px;letter-spacing:-0.184px;color:#000">Duplicate Image</span>
<span id="t_h3" class="t" style="left:719.70px;top:500.19px;font-size:11px;line-height:14px;letter-spacing:-0.424px;color:#000">Similarity</span>
<span id="t_r1a" class="t" style="left:24.60px;top:520.79px;font-size:11px;line-height:14px;letter-spacing:-0.018px;color:#000">C:\Users\mayn\Pictures\Images(1)\image-174 -1.jpg</span>
<span id="t_r2a" class="t" style="left:24.60px;top:537.79px;font-size:11px;line-height:14px;letter-spacing:-0.043px;color:#000">C:\Users\mayn\Pictures\Images 2\image-240.jpg</span>
<span id="t_r3a" class="t" style="left:24.60px;top:554.79px;font-size:11px;line-height:14px;letter-spacing:0.045px;color:#000">C:\Users\mayn\Pictures\Images(1)\flower.jpg</span>
<span id="t_r4a" class="t" style="left:24.60px;top:571.79px;font-size:11px;line-height:14px;letter-spacing:-0.005px;color:#000">C:\Users\mayn\Pictures\Images(1)\image-228 - (2).jpg</span>
<span id="t_r1b" class="t" style="left:364.50px;top:520.79px;font-size:11px;line-height:14px;letter-spacing:-0.012px;color:#000">C:\Users\mayn\Pictures\Images(1)\image-174.jpg</span>
<span id="t_r2b" class="t" style="left:364.50px;top:537.79px;font-size:11px;line-height:14px;letter-spacing:-0.012px;color:#000">C:\Users\mayn\Pictures\Images(1)\image-197.jpg</span>
<span id="t_r3b" class="t" style="left:364.50px;top:554.79px;font-size:11px;line-height:14px;letter-spacing:-0.012px;color:#000">C:\Users\mayn\Pictures\Images(1)\image-226.jpg</span>
<span id="t_r4b" class="t" style="left:364.50px;top:571.79px;font-size:11px;line-height:14px;letter-spacing:-0.025px;color:#000">C:\Users\mayn\Pictures\Images(1)\image-228 - 1.jpg</span>
<span id="t_r1c" class="t" style="left:720.30px;top:520.79px;font-size:11px;line-height:14px;letter-spacing:-0.618px;color:#000">100</span>
<span id="t_r2c" class="t" style="left:720.90px;top:537.79px;font-size:11px;line-height:14px;letter-spacing:0.000px;color:#000">7</span>
<span id="t_r3c" class="t" style="left:720.30px;top:554.79px;font-size:11px;line-height:14px;letter-spacing:-0.618px;color:#000">100</span>
<span id="t_r4c" class="t" style="left:720.30px;top:571.79px;font-size:11px;line-height:14px;letter-spacing:-0.618px;color:#000">100</span>
</body></html>
